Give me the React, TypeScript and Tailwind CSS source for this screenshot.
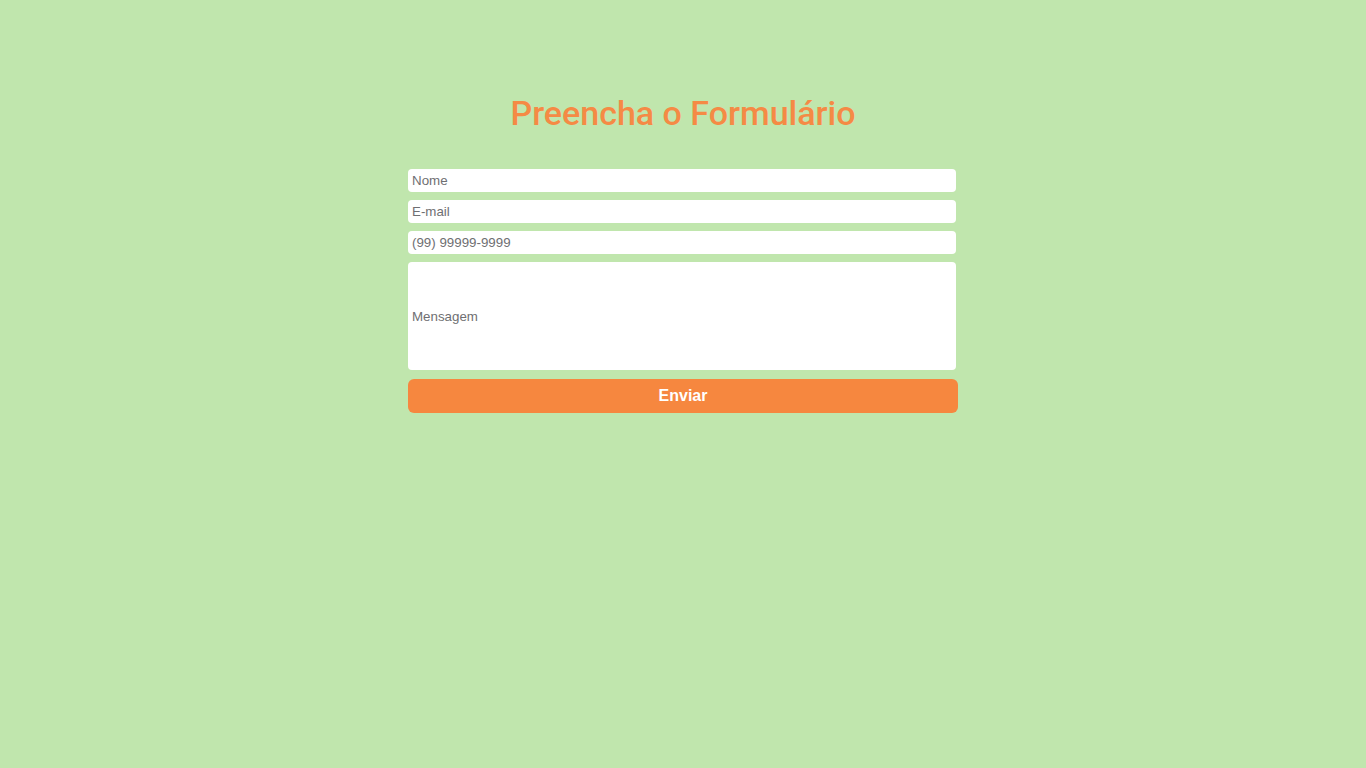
export default function App() {
  return (
    <div className="w-screen h-[818px] bg-[#c0e6ad] pt-[88px]">
      <h1 className="text-center text-[34px] leading-[50px] font-medium text-[#f58a45] font-['Roboto',sans-serif]">
        Preencha o Formulário
      </h1>
      <form
        className="mx-auto mt-[31px] w-[550px] flex flex-col gap-2 font-['Liberation_Sans',Arial,sans-serif]"
        onSubmit={(e) => e.preventDefault()}
      >
        <input
          type="text"
          placeholder="Nome"
          className="w-[548px] h-[23px] bg-white rounded-[4px] px-1 text-[13.33px] outline-none placeholder:text-[#6f6f72]"
        />
        <input
          type="email"
          placeholder="E-mail"
          className="w-[548px] h-[23px] bg-white rounded-[4px] px-1 text-[13.33px] outline-none placeholder:text-[#6f6f72]"
        />
        <input
          type="tel"
          placeholder="(99) 99999-9999"
          className="w-[548px] h-[23px] bg-white rounded-[4px] px-1 text-[13.33px] outline-none placeholder:text-[#6f6f72]"
        />
        <input
          type="text"
          placeholder="Mensagem"
          className="w-[548px] h-[108px] bg-white rounded-[4px] px-1 text-[13.33px] outline-none placeholder:text-[#6f6f72]"
        />
        <button
          type="submit"
          className="mt-px w-[550px] h-[34px] bg-[#f6873f] rounded-[6px] text-white text-[16px] font-bold"
        >
          Enviar
        </button>
      </form>
    </div>
  );
}
